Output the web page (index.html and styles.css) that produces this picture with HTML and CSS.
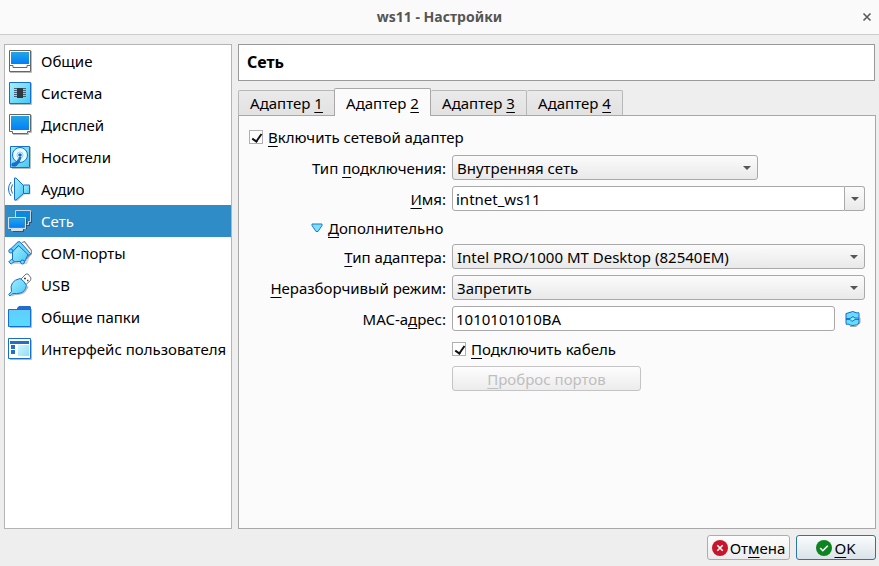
FILE: index.html
```html
<!DOCTYPE html>
<html lang="ru">
<head>
<meta charset="utf-8">
<title>ws11 - Настройки</title>
<link rel="stylesheet" href="styles.css">
</head>
<body>
<svg class="defs" aria-hidden="true">
  <defs>
    <linearGradient id="screen" x1="0" y1="0" x2="0" y2="1"><stop offset="0" stop-color="#25a5e2"/><stop offset="1" stop-color="#0080fa"/></linearGradient>
    <linearGradient id="light" x1="0" y1="0" x2="1" y2="1"><stop offset="0" stop-color="#a9f0ff"/><stop offset="1" stop-color="#45c8f5"/></linearGradient>
    <linearGradient id="down" x1="0" y1="0" x2="0" y2="1"><stop offset="0" stop-color="#62ccfa"/><stop offset="1" stop-color="#55dcff"/></linearGradient>
  </defs>
</svg>
<header class="titlebar">
  <h1>ws11 - Настройки</h1>
  <button class="close" type="button" aria-label="Закрыть"><svg width="10" height="10" viewBox="0 0 10 10"><path d="M1.500 1.500l7 7M8.500 1.500l-7 7" stroke="#5a5a5a" stroke-width="1.600"/></svg></button>
</header>
<main class="window">
  <nav class="sidebar">
    <a href="#general"><svg viewBox="0 0 24 24"><path d="M2 23.500h21.500V2" fill="none" stroke="#bbb"/><path d="M1.500 1.500h21v21h-21z" fill="#fff" stroke="#666"/><path d="M3 3h18v12H3z" fill="url(#screen)"/><path d="M2 16.500h3v2h14v-2h3" fill="none" stroke="#666"/></svg>Общие</a>
    <a href="#system"><svg viewBox="0 0 24 24"><path d="M2 23.500h21.500V2" fill="none" stroke="#bbb"/><path d="M1.500 1.500h21v21h-21z" fill="url(#light)" stroke="#146fd0"/><path d="M6 7.500h12M6 9.500h12M6 11.500h12M6 13.500h12M6 15.500h12" stroke="#45647a"/><path d="M9 7h6v10H9z" fill="#303940"/></svg>Система</a>
    <a href="#display"><svg viewBox="0 0 24 24"><path d="M5 21.500h15.500v-2h3V2" fill="none" stroke="#bbb"/><path d="M1.500 1.500h21v17h-3v2h-15v-2h-3z" fill="#fff" stroke="#666"/><path d="M3 3h18v14H3z" fill="url(#screen)"/></svg>Дисплей</a>
    <a href="#storage"><svg viewBox="0 0 24 24"><path d="M4 23.500h18.500V2" fill="none" stroke="#bbb"/><path d="M2.500 1.500h19v21h-19z" fill="url(#light)" stroke="#146fd0"/><circle cx="12" cy="10" r="7.500" fill="#e4fbff" stroke="#146fd0"/><circle cx="12" cy="10" r="3" fill="#fff" stroke="#5ba8e0" stroke-width=".6"/><circle cx="12" cy="10" r="1.800" fill="#1764c0"/><path d="M4 18.500l4-1 4-5.500 1 .5-2 5-3 3.500H4z" fill="#146fd0" stroke="#146fd0"/></svg>Носители</a>
    <a href="#audio"><svg viewBox="0 0 24 24"><path d="M7 24V3h2l7.500 6.500h6v8h-6l-7 6.500z" fill="#ccc"/><path d="M6.500 22.500V1h1.500l7.500 7.500v8L8 23H6.500z" fill="url(#light)" stroke="#146fd0"/><path d="M15.500 8h6v8.500h-6z" fill="url(#light)" stroke="#146fd0"/><path d="M4.500 7.500q-3 4.500 0 9M3 5q-5 7 0 14" fill="none" stroke="#146fd0"/></svg>Аудио</a>
    <a href="#network" class="current" aria-current="page"><svg viewBox="0 0 24 24"><path d="M9 3h15v11h-2v3H9z" fill="#333" opacity=".6"/><path d="M7.500 1.500h15v11h-2v3h-13z" fill="#0b89de" stroke="#ccd5db"/><path d="M2 10h17v10h-3v3H5v-2H2z" fill="#333" opacity=".6"/><path d="M.5 8.500h17v11h-3v2h-11v-2h-3z" fill="#d8dfe4" stroke="#d8dfe4"/><path d="M1.500 9.500h15v9h-15z" fill="url(#screen)" stroke="#1877b8" stroke-width=".7"/></svg>Сеть</a>
    <a href="#serial"><svg viewBox="0 0 24 24"><path d="M14 1.500l2.500-.8 7 9v3L18 18" fill="none" stroke="#888" stroke-width="1.300"/><path d="M11 2.500L22.500 14 19 23H4l1-9z" fill="#999" opacity=".4"/><path d="M4.500 10l7.500-6.500 8.500 9-3.500 7.500-12.500 1z" fill="url(#light)" stroke="#146fd0"/><path d="M1.500 9L10 .8h2L22.500 12.500 21 14.500 10.500 4.500 4 11.500z" fill="#6bd2fa" stroke="#146fd0"/><circle cx="2.800" cy="10" r="2" fill="#71daff" stroke="#146fd0"/><circle cx="14.500" cy="21" r="2" fill="#71daff" stroke="#146fd0"/><path d="M.7 21l3-3 2.500 2.500-3 2.500z" fill="#71daff" stroke="#146fd0"/></svg>COM-порты</a>
    <a href="#usb"><svg viewBox="0 0 24 24"><path d="M12.500 6.500l5.500-5.500h2l3 4-.5 2.500-4.500 4z" fill="#fff" stroke="#777"/><path d="M16 5.500h2M19 7.500h1.500" stroke="#444" stroke-width="1.600"/><path d="M4 23l2-1.500q8 0 11-3l3-5" fill="none" stroke="#bbb" stroke-width="1.500"/><path d="M12 5.500q4 2 6.500 7-1.500 6.500-6 7.500-4 1-7.500.5l-3 2.500L.7 21.500l2.800-3Q1 8 12 5.500z" fill="url(#light)" stroke="#146fd0"/></svg>USB</a>
    <a href="#shared"><svg viewBox="0 0 24 24"><path d="M2 22.500h21.500V4" fill="none" stroke="#bbb"/><path d="M9 5V3l2-2h11l1 1v3z" fill="#246dca"/><path d="M.5 4.500h22v17H.5z" fill="url(#down)" stroke="#146fd0"/></svg>Общие папки</a>
    <a href="#ui"><svg viewBox="0 0 24 24"><path d="M2 22.500h21.500V3" fill="none" stroke="#bbb"/><path d="M.5 1.500h22v20H.5z" fill="#fff" stroke="#146fd0"/><path d="M2 4h19v3H2zM3 8h4v4H3zM3 13h4v4H3z" fill="#246dca"/><path d="M10 8h11v11H10z" fill="url(#light)" opacity=".6"/></svg>Интерфейс пользователя</a>
  </nav>
  <section class="content">
    <h2>Сеть</h2>
    <div class="tabs" role="tablist">
      <button type="button" role="tab">Адаптер <u>1</u></button>
      <button type="button" role="tab" aria-selected="true">Адаптер <u>2</u></button>
      <button type="button" role="tab">Адаптер <u>3</u></button>
      <button type="button" role="tab">Адаптер <u>4</u></button>
    </div>
    <form class="panel" id="settings">
      <label class="check"><input type="checkbox" checked><span><u>В</u>ключить сетевой адаптер</span></label>
      <div class="fields">
        <label for="attach">Тип <u>п</u>одключения:</label>
        <div class="select short"><select id="attach"><option>Внутренняя сеть</option></select></div>
        <label for="name"><u>И</u>мя:</label>
        <div class="combo"><input id="name" type="text" value="intnet_ws11"><button type="button" aria-label="Список сетей"></button></div>
        <button type="button" class="more" aria-expanded="true"><svg width="12" height="10" viewBox="0 0 12 10"><path d="M1 1h10v1.500L7 8.500H5L1 2.500z" fill="#7be0fb" stroke="#1878d4" stroke-linejoin="round"/></svg><span><u>Д</u>ополнительно</span></button>
        <label for="type"><u>Т</u>ип адаптера:</label>
        <div class="select"><select id="type"><option>Intel PRO/1000 MT Desktop (82540EM)</option></select></div>
        <label for="mode"><u>Н</u>еразборчивый режим:</label>
        <div class="select"><select id="mode"><option>Запретить</option></select></div>
        <label for="mac">MAC-а<u>д</u>рес:</label>
        <div class="mac"><input id="mac" type="text" value="1010101010BA"><button type="button" aria-label="Обновить адрес"><svg width="16" height="16" viewBox="0 0 16 16"><path d="M5 15.500h6l4-3.500V7" fill="none" stroke="#aaa"/><path d="M1 2.500L3 2q5-3 9 0l1.500-.5.500 1V12q-2 2.500-6 2.500-3 0-5-1.500l-1.500.5L1 12z" fill="#68dcfa" stroke="#126bd0"/><path d="M1 7.500h4l3-2 2 1.500h4M1 8.500h4l2 2 3-2h4" fill="none" stroke="#126bd0" stroke-width=".9"/><path d="M6 8l2-1 1.500 1-2 1z" fill="#b9f4ff"/></svg></button></div>
        <label class="check cable"><input type="checkbox" checked><span><u>П</u>одключить кабель</span></label>
        <button type="button" class="push forward" disabled><u>П</u>роброс портов</button>
      </div>
    </form>
  </section>
  <footer class="actions">
    <button type="button" class="push cancel"><svg width="16" height="16" viewBox="0 0 16 16"><circle cx="8" cy="8" r="8" fill="#c7162b"/><path d="M5.300 5.300l5.400 5.400M10.700 5.300l-5.400 5.400" stroke="#fff" stroke-width="1.600"/></svg><span>От<u>м</u>ена</span></button>
    <button type="submit" form="settings" class="push ok"><svg width="16" height="16" viewBox="0 0 16 16"><circle cx="8" cy="8" r="8" fill="#0e8420"/><path d="M4.200 8l2.600 2.700 5-5" fill="none" stroke="#fff" stroke-width="1.600"/></svg><span><u>O</u>K</span></button>
  </footer>
</main>
</body>
</html>
```
FILE: styles.css
```css
* { box-sizing: border-box; }

body {
  margin: 0;
  min-height: 100vh;
  display: flex;
  flex-direction: column;
  background: #eee;
  color: #000;
  font: 15px/20px "Noto Sans", sans-serif;
}

button, input, select { font: inherit; color: inherit; margin: 0; }
button { padding: 0; border: 0; background: none; }
u { text-decoration-thickness: 1px; text-underline-offset: 3px; }
.defs { position: absolute; width: 0; height: 0; }

.titlebar {
  display: grid;
  grid-template-columns: 24px 1fr 24px;
  align-items: center;
  height: 35px;
  background: #fafafa;
  border-bottom: 1px solid #ccc;
}
.titlebar h1 {
  grid-column: 2;
  margin: 0;
  text-align: center;
  font-size: 14px;
  line-height: 20px;
  color: #555;
}
.close { display: flex; justify-content: center; }

.window {
  flex: 1;
  display: grid;
  grid-template-columns: 228px 1fr;
  grid-template-rows: 1fr auto;
  column-gap: 6px;
  row-gap: 6px;
  padding: 9px 3px 6px 4px;
}

.sidebar { background: #fff; border: 1px solid #b4b4b4; }
.sidebar a {
  display: flex;
  align-items: center;
  gap: 9px;
  height: 32px;
  padding-left: 3px;
  color: inherit;
  text-decoration: none;
  white-space: nowrap;
}
.sidebar svg { width: 24px; height: 24px; flex: none; }
.sidebar .current { background: #308cc6; color: #fff; }

.content { display: flex; flex-direction: column; }
.content h2 {
  margin: 0 1px 8px 0;
  padding: 8px;
  background: #fff;
  border: 1px solid #999;
  font-size: 16px;
  line-height: 19px;
}

.tabs { display: flex; align-items: flex-end; height: 26px; }
.tabs button {
  height: 25px;
  width: 96px;
  background: linear-gradient(#eaeaea, #e2e2e2);
  border: 1px solid #b8b8b8;
  border-left-width: 0;
  border-bottom: 0;
  border-radius: 2px 2px 0 0;
}
.tabs button:first-child { border-left-width: 1px; width: 97px; }
.tabs [aria-selected] {
  position: relative;
  height: 28px;
  width: 97px;
  margin: 0 0 -1px -1px;
  background: #fbfbfb;
  border-left-width: 1px;
  border-color: #a8a8a8;
}

.panel {
  flex: 1;
  padding: 11px 10px;
  background: #fbfbfb;
  border: 1px solid #a8a8a8;
}

.check { display: flex; align-items: center; gap: 5px; }
.check input {
  appearance: none;
  position: relative;
  width: 14px;
  height: 14px;
  background: #fff;
  border: 1px solid #b0b0b0;
}
.check input:checked::after {
  content: "";
  position: absolute;
  left: 4px;
  top: 1px;
  width: 4px;
  height: 8px;
  border: solid #111;
  border-width: 0 2px 2px 0;
  transform: rotate(35deg);
}

.fields {
  display: grid;
  grid-template-columns: 197px 1fr;
  grid-template-rows: 25px 25px 21px 25px 25px 25px 23px 25px;
  gap: 6px;
  margin-top: 8px;
  align-items: center;
}
.fields > label:not(.check) { text-align: right; white-space: nowrap; }

.select { position: relative; }
.short { width: 74%; }
.select select {
  display: block;
  appearance: none;
  width: 100%;
  height: 25px;
  padding: 0 24px 0 4px;
  background: linear-gradient(#fbfbfb, #e9e9e9);
  border: 1px solid #a9a9a9;
  border-radius: 3px;
}
.select::after, .combo button::after {
  content: "";
  border: solid transparent;
  border-width: 4px 4px 0;
  border-top-color: #555;
}
.select::after {
  position: absolute;
  right: 7px;
  top: 11px;
  pointer-events: none;
}

.combo, .mac { display: flex; }
.combo input, .mac input {
  flex: 1;
  min-width: 0;
  height: 25px;
  padding: 0 3px;
  background: #fff;
  border: 1px solid #a9a9a9;
  border-radius: 3px;
}
.combo input { border-radius: 3px 0 0 3px; }
.combo button {
  display: flex;
  align-items: center;
  justify-content: center;
  width: 20px;
  background: linear-gradient(#fbfbfb, #e9e9e9);
  border: 1px solid #a9a9a9;
  border-left: 0;
  border-radius: 0 3px 3px 0;
}
.mac { gap: 6px; }
.mac button { display: flex; align-items: center; justify-content: center; width: 24px; }

.more {
  grid-column: 1 / -1;
  justify-self: start;
  display: flex;
  align-items: center;
  gap: 5px;
  margin-left: 62px;
}
.cable, .forward { grid-column: 2; }

.push {
  display: flex;
  align-items: center;
  justify-content: center;
  gap: 2px;
  height: 25px;
  background: linear-gradient(#fdfdfd, #ececec);
  border: 1px solid #adadad;
  border-radius: 3px;
}
.forward { display: block; width: 189px; color: #bebebe; border-color: #c4c4c4; }

.actions {
  grid-column: 1 / -1;
  display: flex;
  justify-content: flex-end;
  gap: 6px;
}
.cancel { width: 83px; }
.ok {
  width: 80px;
  background: linear-gradient(#fafcfd, #d9e3e9);
  border-color: #2d76a3;
}
```
